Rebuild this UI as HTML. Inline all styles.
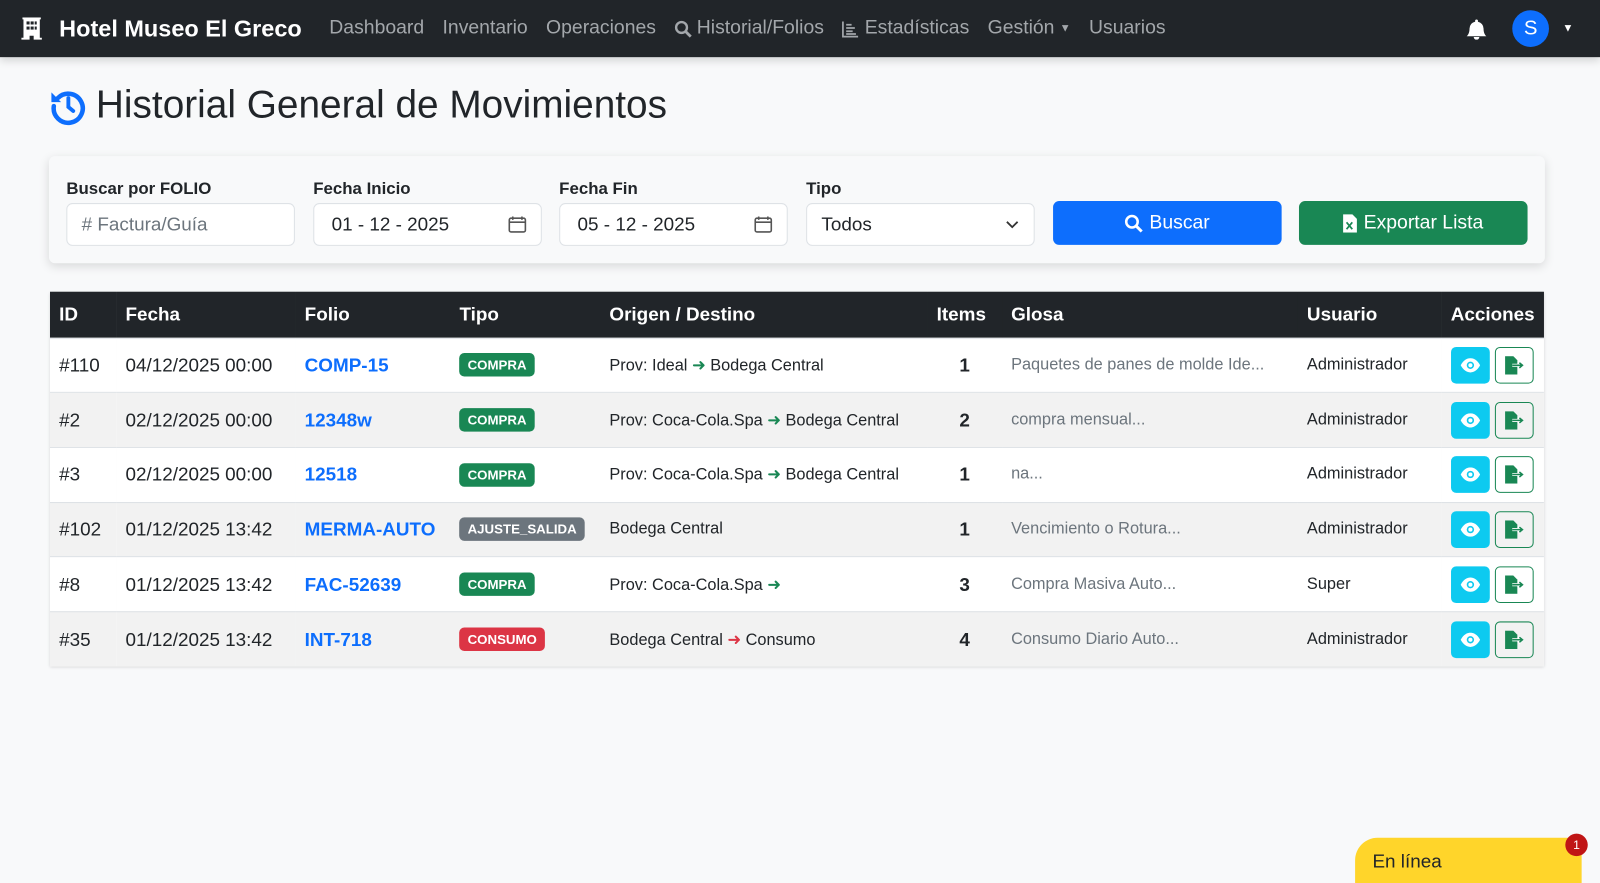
<!DOCTYPE html>
<html><head><meta charset="utf-8"><style>
*{box-sizing:border-box;margin:0;padding:0}
html,body{width:1600px;height:883px;overflow:hidden;background:#f8f9fa}
#w{width:1568px;height:866px;position:relative;transform:scale(1.020408);transform-origin:0 0;font-family:"Liberation Sans","Noto Sans CJK JP",sans-serif;color:#212529}
.nav{height:56px;background:#212529;display:flex;align-items:center;padding-left:20px;box-shadow:0 4px 8px rgba(0,0,0,.15)}
.brand{color:#fff;font-weight:bold;font-size:23px;display:flex;align-items:center;gap:16px;margin-right:18px}
.nl{color:#a3a7ab;font-size:19px;margin:0 9px;display:flex;align-items:center;gap:5px}
.right{position:absolute;right:0;top:0;height:56px;display:flex;align-items:center}
h1{position:absolute;left:48px;top:82px;font-size:38px;font-weight:normal;display:flex;align-items:center;gap:8px}
.card{position:absolute;left:48px;top:153px;width:1466px;height:105px;background:#f8f9fa;border-radius:6px;box-shadow:0 3px 10px rgba(0,0,0,.13)}
.f{position:absolute;top:23px;width:224px}
.f label{display:block;font-weight:bold;font-size:16.5px;margin-bottom:4px}
.inp{height:42px;border:1px solid #dee2e6;border-radius:6px;background:#fff;font-size:18.5px;display:flex;align-items:center;padding:0 14px;justify-content:space-between}
.btn{position:absolute;top:44px;width:224px;height:43px;border-radius:6px;color:#fff;font-size:19px;display:flex;align-items:center;justify-content:center;gap:6px}
table{position:absolute;left:49px;top:286px;width:1464px;border-collapse:collapse;border-spacing:0;font-size:16px;box-shadow:0 1px 3px rgba(0,0,0,.15)}
tr.h{background:#212529}
th{background:#212529;color:#fff;text-align:left;height:45px;font-size:18.5px;padding:0 9px;border:none}
td{height:53.7px;padding:0 9px;border-top:1px solid #dee2e6;font-size:16px}
tr:nth-child(odd) td{background:#f2f2f2}
tr:nth-child(even) td{background:#fff}
td.big{font-size:18.5px}
.fo{color:#0d6efd;font-weight:bold;font-size:18.5px}
.b{display:inline-block;color:#fff;font-size:13px;font-weight:bold;padding:4px 8px;border-radius:5px}
.g{background:#198754}.gr{background:#6c757d}.r{background:#dc3545}
.gl{color:#6c757d}
.ac{display:flex;gap:5px}
.eye{width:38px;height:36px;background:#0dcaf0;border-radius:5px;display:flex;align-items:center;justify-content:center}
.ex{width:38px;height:36px;border:1.5px solid #198754;border-radius:5px;display:flex;align-items:center;justify-content:center}
</style></head><body><div id="w">
<div class="nav">
<div class="brand"><svg width="22" height="22" viewBox="0 0 22 22"><path fill="#fff" d="M2 0h18v2h-1v18h2v2H13v-4h-4v4H1v-2h2V2H2z"/><g fill="#212529"><rect x="6" y="4" width="3" height="3"/><rect x="10" y="4" width="3" height="3"/><rect x="14" y="4" width="2" height="3"/><rect x="6" y="9" width="3" height="3"/><rect x="10" y="9" width="3" height="3"/><rect x="14" y="9" width="2" height="3"/></g></svg>Hotel Museo El Greco</div>
<span class="nl">Dashboard</span><span class="nl">Inventario</span><span class="nl">Operaciones</span>
<span class="nl"><svg width="17" height="17" viewBox="0 0 16 16"><circle cx="6.5" cy="6.5" r="5" fill="none" stroke="#a3a7ab" stroke-width="2.2"/><path d="M10 10l5 5" stroke="#a3a7ab" stroke-width="2.6"/></svg>Historial/Folios</span>
<span class="nl"><svg width="17" height="17" viewBox="0 0 16 16"><path d="M1 1v14h14" stroke="#a3a7ab" stroke-width="1.6" fill="none"/><path d="M4 4h5M4 7h8M4 10h6M4 12.5h9" stroke="#a3a7ab" stroke-width="1.6"/></svg>Estadísticas</span>
<span class="nl">Gestión <span style="font-size:11px">▼</span></span><span class="nl">Usuarios</span>
<div class="right">
<svg width="22" height="22" viewBox="0 0 16 16" style="margin-right:24px"><path fill="#fff" d="M8 16a2 2 0 0 0 2-2H6a2 2 0 0 0 2 2zM8 1.5a1 1 0 0 1 1 1v.6A5 5 0 0 1 13 8c0 3 1 4.5 2 5.5H1c1-1 2-2.5 2-5.5a5 5 0 0 1 4-4.9v-.6a1 1 0 0 1 1-1z"/></svg>
<div style="width:36px;height:36px;border-radius:50%;background:#0d6efd;color:#fff;font-size:20px;display:flex;align-items:center;justify-content:center">S</div>
<span style="color:#fff;font-size:11px;margin:0 26px 0 13px">▼</span>
</div></div>
<h1><svg width="38" height="38" viewBox="0 0 24 24"><path d="M5.5 7A9 9 0 1 1 3 12" fill="none" stroke="#0d6efd" stroke-width="2.8" stroke-linecap="round"/><path d="M1.5 3.5l0 6h6z" fill="#0d6efd"/><path d="M12 7v5.5l3 2.5" fill="none" stroke="#0d6efd" stroke-width="2.4" stroke-linecap="round"/></svg>Historial General de Movimientos</h1>
<div class="card">
<div class="f" style="left:17px"><label>Buscar por FOLIO</label><div class="inp" style="color:#6c757d"># Factura/Guía</div></div>
<div class="f" style="left:259px"><label>Fecha Inicio</label><div class="inp"><span style="margin-left:3px">01 - 12 - 2025</span><svg width="18" height="18" viewBox="0 0 16 16"><rect x="1" y="2.5" width="14" height="12" rx="1.5" fill="none" stroke="#555" stroke-width="1.4"/><path d="M1 6h14M4 1v3M12 1v3" stroke="#555" stroke-width="1.4"/></svg></div></div>
<div class="f" style="left:500px"><label>Fecha Fin</label><div class="inp"><span style="margin-left:3px">05 - 12 - 2025</span><svg width="18" height="18" viewBox="0 0 16 16"><rect x="1" y="2.5" width="14" height="12" rx="1.5" fill="none" stroke="#555" stroke-width="1.4"/><path d="M1 6h14M4 1v3M12 1v3" stroke="#555" stroke-width="1.4"/></svg></div></div>
<div class="f" style="left:742px"><label>Tipo</label><div class="inp">Todos<svg width="14" height="14" viewBox="0 0 16 16"><path d="M2 5l6 6 6-6" fill="none" stroke="#333" stroke-width="2"/></svg></div></div>
<div class="btn" style="left:984px;background:#0d6efd"><svg width="18" height="18" viewBox="0 0 16 16"><circle cx="6.5" cy="6.5" r="5" fill="none" stroke="#fff" stroke-width="2.2"/><path d="M10 10l5 5" stroke="#fff" stroke-width="2.6"/></svg>Buscar</div>
<div class="btn" style="left:1225px;background:#198754"><svg width="14" height="18" viewBox="0 0 12 16"><path fill="#fff" d="M0 0h8l4 4v12H0z"/><path d="M3 7l5 6M8 7l-5 6" stroke="#198754" stroke-width="1.5"/></svg>Exportar Lista</div>
</div>
<table>
<tr class="h"><th style="width:65px">ID</th><th style="width:176px">Fecha</th><th style="width:152px">Folio</th><th style="width:147px">Tipo</th><th style="width:322px">Origen / Destino</th><th style="width:73px">Items</th><th style="width:291px">Glosa</th><th style="width:141px">Usuario</th><th>Acciones</th></tr>
<tr><td class="big">#110</td><td class="big">04/12/2025 00:00</td><td class="fo">COMP-15</td><td><span class="b g">COMPRA</span></td><td>Prov: Ideal <span style="color:#198754">➜</span> Bodega Central</td><td style="text-align:center;font-weight:bold" class="big">1</td><td class="gl">Paquetes de panes de molde Ide...</td><td>Administrador</td><td><div class="ac"><div class="eye">E</div><div class="ex">X</div></div></td></tr>
<tr><td class="big">#2</td><td class="big">02/12/2025 00:00</td><td class="fo">12348w</td><td><span class="b g">COMPRA</span></td><td>Prov: Coca-Cola.Spa <span style="color:#198754">➜</span> Bodega Central</td><td style="text-align:center;font-weight:bold" class="big">2</td><td class="gl">compra mensual...</td><td>Administrador</td><td><div class="ac"><div class="eye">E</div><div class="ex">X</div></div></td></tr>
<tr><td class="big">#3</td><td class="big">02/12/2025 00:00</td><td class="fo">12518</td><td><span class="b g">COMPRA</span></td><td>Prov: Coca-Cola.Spa <span style="color:#198754">➜</span> Bodega Central</td><td style="text-align:center;font-weight:bold" class="big">1</td><td class="gl">na...</td><td>Administrador</td><td><div class="ac"><div class="eye">E</div><div class="ex">X</div></div></td></tr>
<tr><td class="big">#102</td><td class="big">01/12/2025 13:42</td><td class="fo">MERMA-AUTO</td><td><span class="b gr">AJUSTE_SALIDA</span></td><td>Bodega Central</td><td style="text-align:center;font-weight:bold" class="big">1</td><td class="gl">Vencimiento o Rotura...</td><td>Administrador</td><td><div class="ac"><div class="eye">E</div><div class="ex">X</div></div></td></tr>
<tr><td class="big">#8</td><td class="big">01/12/2025 13:42</td><td class="fo">FAC-52639</td><td><span class="b g">COMPRA</span></td><td>Prov: Coca-Cola.Spa <span style="color:#198754">➜</span></td><td style="text-align:center;font-weight:bold" class="big">3</td><td class="gl">Compra Masiva Auto...</td><td>Super</td><td><div class="ac"><div class="eye">E</div><div class="ex">X</div></div></td></tr>
<tr><td class="big">#35</td><td class="big">01/12/2025 13:42</td><td class="fo">INT-718</td><td><span class="b r">CONSUMO</span></td><td>Bodega Central <span style="color:#dc3545">➜</span> Consumo</td><td style="text-align:center;font-weight:bold" class="big">4</td><td class="gl">Consumo Diario Auto...</td><td>Administrador</td><td><div class="ac"><div class="eye">E</div><div class="ex">X</div></div></td></tr>
</table>
<div style="position:absolute;left:1328px;top:821px;width:222px;height:62px;background:#ffd52a;border-radius:22px 0 0 0;font-size:18.5px;padding:12px 17px">En línea</div>
<div style="position:absolute;left:1534px;top:817px;width:22px;height:22px;border-radius:50%;background:#c01515;color:#fff;font-size:12px;display:flex;align-items:center;justify-content:center">1</div>
</div>
<script>
var eye='<svg width="20" height="14" viewBox="0 0 20 14"><path d="M0.5 7C3 2 7 0 10 0s7 2 9.5 7c-2.5 5-6.5 7-9.5 7S3 12 0.5 7z" fill="#fff"/><circle cx="10" cy="7" r="3.6" fill="#0dcaf0"/><circle cx="10" cy="7" r="2" fill="#fff"/></svg>';
var ex='<svg width="20" height="18" viewBox="0 0 20 18"><path d="M1 0h8l4 4v14H1z" fill="#198754"/><path d="M8 9h9M14 6l3 3-3 3" fill="none" stroke="#fff" stroke-width="3"/><path d="M8 9h10M15 6.5l3 2.5-3 2.5" fill="none" stroke="#198754" stroke-width="1.5"/></svg>';
document.querySelectorAll('.eye').forEach(function(e){e.innerHTML=eye});
document.querySelectorAll('.ex').forEach(function(e){e.innerHTML=ex});
</script>
</body></html>
